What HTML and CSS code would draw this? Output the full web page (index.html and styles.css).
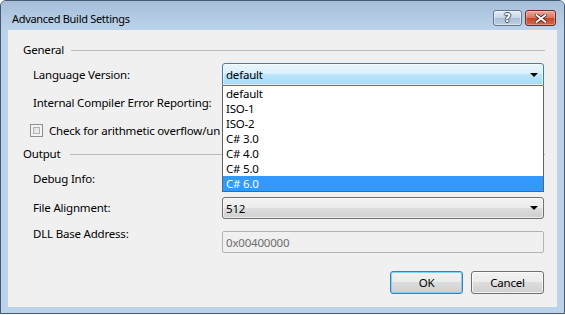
FILE: index.html
```html
<!DOCTYPE html>
<html lang="en">
<head>
    <meta charset="UTF-8">
    <title>Advanced Build Settings</title>
    <link rel="stylesheet" href="styles.css">
</head>
<body>
    <div class="window">
        <div class="titlebar">
            <span class="title">Advanced Build Settings</span>
            <div class="caption-buttons">
                <div class="cap-btn help"><span>?</span></div>
                <div class="cap-btn close">
                    <svg width="12" height="9" viewBox="0 0 12 9">
                        <path d="M1.5 1 L10.5 8 M10.5 1 L1.5 8" stroke="#3b1a14" stroke-width="3.4" stroke-linecap="square"/>
                        <path d="M1.5 1 L10.5 8 M10.5 1 L1.5 8" stroke="#ffffff" stroke-width="1.8" stroke-linecap="square"/>
                    </svg>
                </div>
            </div>
        </div>

        <div class="frame">
            <div class="client">
                <div class="section section-general">
                    <span>General</span>
                    <div class="rule"></div>
                </div>

                <div class="row row-lang">
                    <label class="field-label">Language Version:</label>
                    <div class="combo combo-focused">
                        <span>default</span>
                        <i class="arrow"></i>
                        <ul class="droplist">
                            <li>default</li>
                            <li>ISO-1</li>
                            <li>ISO-2</li>
                            <li>C# 3.0</li>
                            <li>C# 4.0</li>
                            <li>C# 5.0</li>
                            <li class="selected">C# 6.0</li>
                        </ul>
                    </div>
                </div>

                <!-- the combos of the next rows sit under the open list -->
                <div class="row row-internal">
                    <label class="field-label">Internal Compiler Error Reporting:</label>
                    <div class="combo"><i class="arrow"></i></div>
                </div>

                <div class="check-row">
                    <span class="checkbox"></span>
                    <span class="check-text">Check for arithmetic overflow/underflow</span>
                </div>

                <div class="section section-output">
                    <span>Output</span>
                    <div class="rule"></div>
                </div>

                <div class="row row-debug">
                    <label class="field-label">Debug Info:</label>
                    <div class="combo"><i class="arrow"></i></div>
                </div>

                <div class="row row-file">
                    <label class="field-label">File Alignment:</label>
                    <div class="combo"><span>512</span><i class="arrow"></i></div>
                </div>

                <div class="row row-dll">
                    <label class="field-label">DLL Base Address:</label>
                    <div class="textbox disabled">0x00400000</div>
                </div>

                <div class="buttons">
                    <button class="btn btn-default">OK</button>
                    <button class="btn">Cancel</button>
                </div>
            </div>
        </div>
    </div>
</body>
</html>
```

FILE: styles.css
```css
body {
    margin: 0;
    background: #ffffff;
    font-family: "Noto Sans", "Open Sans", sans-serif;
    font-size: 11.5px;
    letter-spacing: -0.2px;
    color: #000;
}

.window {
    width: 563px;
    height: 312px;
    border: 1px solid #46596e;
    border-radius: 6px 6px 0 0;
    background: #bad2ea;
    display: flex;
    flex-direction: column;
    box-shadow: 0 1px 0 #2f98a6;
}

.titlebar {
    height: 29px;
    display: flex;
    justify-content: space-between;
    align-items: flex-start;
    padding: 0 8px 0 11px;
    border-radius: 5px 5px 0 0;
    background: linear-gradient(#a6bed8, #b4cbe4 60%, #bbd2ea);
}

.title {
    margin-top: 10px;
    line-height: 16px;
    font-size: 11px;
    letter-spacing: -0.3px;
}

.caption-buttons {
    display: flex;
    gap: 3px;
    margin-top: 9px;
}

.cap-btn {
    height: 14px;
    border-radius: 3px;
    display: flex;
    align-items: center;
    justify-content: center;
}

.help {
    width: 27px;
    border: 1px solid #63768c;
    background: linear-gradient(#e6eef6, #c6d6e7 48%, #a9bfd6 52%, #bcd0e4);
    box-shadow: inset 0 0 0 1px rgba(255, 255, 255, 0.45);
}

.help span {
    font-family: "DejaVu Sans", sans-serif;
    font-weight: bold;
    font-size: 12px;
    line-height: 14px;
    color: #fff;
    text-shadow: -1px 0 #3c4f66, 1px 0 #3c4f66, 0 -1px #3c4f66, 0 1px #3c4f66;
}

.close {
    width: 29px;
    border: 1px solid #6e2c22;
    background: linear-gradient(#e9a999, #d8755f 48%, #c6452b 52%, #d1684c);
    box-shadow: inset 0 0 0 1px rgba(255, 220, 210, 0.4);
}

.frame {
    flex: 1;
    display: flex;
    padding: 0 7px 6px 7px;
}

.client {
    flex: 1;
    background: #f0f0f0;
    padding: 0 13px 0 15px;
    display: flex;
    flex-direction: column;
}

/* section headers with a line after the caption */
.section {
    height: 16px;
    display: flex;
    align-items: center;
    line-height: 16px;
}

.section .rule {
    flex: 1;
    height: 1px;
    margin-left: 7px;
    margin-right: -1px;
    background: #b9b9b9;
}

.section-general {
    margin-top: 12px;
}

.section-output {
    margin-top: 9px;
}

.section-output .rule {
    margin-left: 10px;
}

.row {
    display: flex;
    align-items: center;
    height: 22px;
}

.field-label {
    width: 189px;
    margin-left: 10px;
    line-height: 16px;
    white-space: nowrap;
}

.row-lang {
    margin-top: 5px;
    height: 23px;
}

.row-internal {
    margin-top: 6px;
}

.row-debug {
    margin-top: 6px;
}

.row-file {
    margin-top: 7px;
}

.row-dll {
    margin-top: 12px;
    align-items: flex-start;
}

.row-dll .field-label {
    margin-top: -5px;
}

.combo {
    position: relative;
    flex: 1;
    height: 100%;
    box-sizing: border-box;
    border: 1px solid #707070;
    border-radius: 3px;
    padding-left: 3px;
    display: flex;
    align-items: center;
    background: linear-gradient(#f2f2f2, #ebebeb 50%, #dddddd 50%, #cfcfcf);
    box-shadow: inset 0 0 0 1px rgba(255, 255, 255, 0.6);
}

.combo-focused {
    z-index: 2;
    border-color: #3c7fb1;
    border-radius: 3px 3px 0 0;
    background: linear-gradient(#eaf6fd, #d9f0fc 50%, #bee6fd 50%, #a7d9f5);
}

.arrow {
    position: absolute;
    right: 5px;
    top: 50%;
    margin-top: -2px;
    border-left: 4px solid transparent;
    border-right: 4px solid transparent;
    border-top: 4px solid #000;
}

.droplist {
    position: absolute;
    top: 22px;
    left: -1px;
    right: -1px;
    margin: 0;
    padding: 0;
    list-style: none;
    background: #fff;
    border: 1px solid #646464;
    border-top: none;
}

.droplist li {
    height: 15px;
    line-height: 15px;
    padding-left: 3px;
}

.droplist .selected {
    background: #3399ff;
    color: #fff;
}

.check-row {
    margin-top: 10px;
    margin-left: 7px;
    height: 13px;
    display: flex;
    align-items: center;
    gap: 6px;
    line-height: 16px;
    white-space: nowrap;
}

/* text runs on under the open list, so it stops at the list edge */
.check-text {
    max-width: 171px;
    overflow: hidden;
}

.checkbox {
    width: 11px;
    height: 11px;
    border: 1px solid #8e8f8f;
    background: linear-gradient(135deg, #d9d9d9, #f6f6f6);
    box-shadow: inset 0 0 0 2px #f4f4f4, inset 0 0 0 3px #b0b0b0;
}

.textbox {
    flex: 1;
    height: 100%;
    box-sizing: border-box;
    border: 1px solid #b3b3b3;
    border-radius: 2px;
    padding-left: 3px;
    display: flex;
    align-items: center;
}

.textbox.disabled {
    background: #f0f0f0;
    color: #6d6d6d;
}

.buttons {
    margin-top: 18px;
    display: flex;
    justify-content: flex-end;
    gap: 8px;
}

.btn {
    width: 73px;
    height: 23px;
    font-family: inherit;
    font-size: 11.5px;
    letter-spacing: -0.2px;
    color: #000;
    border: 1px solid #707070;
    border-radius: 3px;
    background: linear-gradient(#f2f2f2, #ebebeb 50%, #dddddd 50%, #cfcfcf);
    box-shadow: inset 0 0 0 1px rgba(255, 255, 255, 0.7);
    padding: 0;
}

.btn-default {
    border-color: #3c7fb1;
    box-shadow: inset 0 0 0 1px #7ed3f7;
}
```
